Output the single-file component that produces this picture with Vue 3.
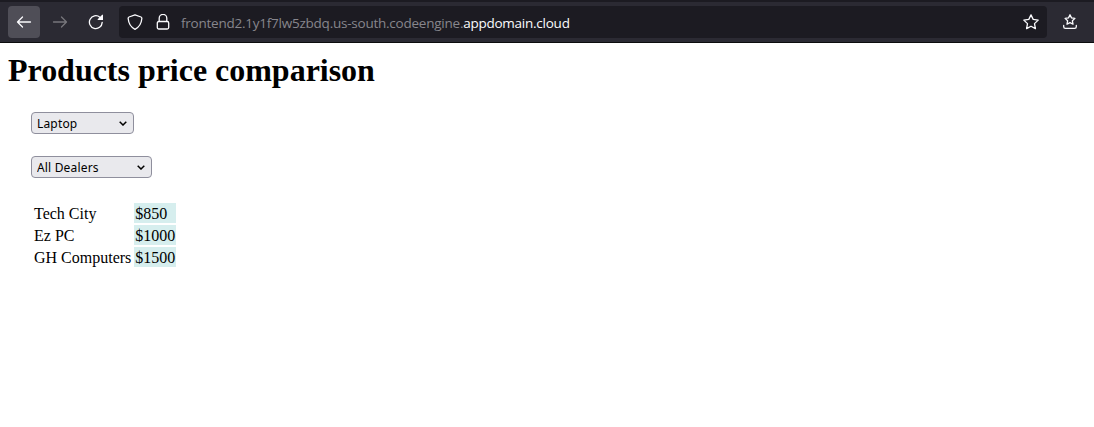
<script setup>
import { ref } from 'vue'

const products = ['Laptop']
const dealers = ['All Dealers']
const product = ref('Laptop')
const dealer = ref('All Dealers')
const prices = [
  { dealer: 'Tech City', price: 850 },
  { dealer: 'Ez PC', price: 1000 },
  { dealer: 'GH Computers', price: 1500 },
]
</script>

<template>
  <div class="window">
    <header class="toolbar">
      <button class="nav back" aria-label="Back">
        <svg width="16" height="16" viewBox="0 0 16 16"><path d="M14.500 8H1.600M6.500 3 1.500 8 6.500 13" /></svg>
      </button>
      <button class="nav forward" aria-label="Forward">
        <svg width="16" height="16" viewBox="0 0 16 16"><path d="M1.500 8h12.900M9.500 3 14.500 8 9.500 13" /></svg>
      </button>
      <button class="nav reload" aria-label="Reload">
        <svg width="16" height="16" viewBox="0 0 16 16">
          <path d="M14.2 8.4A6.4 6.4 0 1 1 11.9 3.2" />
          <path class="solid" d="M14.2.7a.5.5 0 0 1 .8.4V6H10.1a.5.5 0 0 1-.4-.8z" />
        </svg>
      </button>
      <div class="address">
        <svg class="shield" width="16" height="16" viewBox="0 0 16 16">
          <path d="M8 .8 14 3Q15 3.4 14.8 4.8C14.4 9.5 12.2 13.2 8 15.3 3.8 13.2 1.6 9.5 1.2 4.8Q1 3.4 2 3Z" />
        </svg>
        <svg class="lock" width="16" height="16" viewBox="0 0 16 16">
          <path d="M4.2 7V4.2a3.8 3.8 0 0 1 7.6 0V7" />
          <rect x="2.3" y="7.5" width="11.4" height="7.5" rx="1.5" />
        </svg>
        <span class="url"><span class="sub">frontend2.1y1f7lw5zbdq.us-south.codeengine.</span><span class="domain">appdomain.cloud</span></span>
        <svg class="star" width="16" height="16" viewBox="0 0 16 16">
          <path d="m8 .9 2.2 4.5 5 .7-3.7 3.5.9 5L8 12.2l-4.4 2.4.9-5L.8 6.1l5-.7Z" />
        </svg>
      </div>
      <svg class="tray" width="16" height="16" viewBox="0 0 16 16">
        <path d="m8 .8 1.500 3.100 3.400.500-2.500 2.400.600 3.400L8 8.600l-3 1.600.6-3.400-2.500-2.400 3.400-.5Z" />
        <path d="M1.700 11.500v1.200q0 1.700 1.700 1.700h9.200q1.700 0 1.700-1.700V11.500" />
      </svg>
    </header>
    <main class="page">
      <h1>Products price comparison</h1>
      <div class="content">
        <div class="picker product">
          <select v-model="product" aria-label="Product">
            <option v-for="p in products" :key="p">{{ p }}</option>
          </select>
          <svg width="8" height="5" viewBox="0 0 8 5"><path d="m.7.7 3.300 3.300L7.300.7" /></svg>
        </div>
        <div class="picker dealer">
          <select v-model="dealer" aria-label="Dealer">
            <option v-for="d in dealers" :key="d">{{ d }}</option>
          </select>
          <svg width="8" height="5" viewBox="0 0 8 5"><path d="m.7.7 3.300 3.300L7.300.7" /></svg>
        </div>
        <table>
          <tbody>
            <tr v-for="row in prices" :key="row.dealer">
              <td>{{ row.dealer }}</td>
              <td class="price">${{ row.price }}</td>
            </tr>
          </tbody>
        </table>
      </div>
    </main>
  </div>
</template>

<style>
body {
  margin: 0;
  background: #fff;
}
</style>

<style scoped>
.window {
  height: 427px;
  overflow: hidden;
  font-family: "Liberation Serif", serif;
  color: #000;
}
.toolbar {
  box-sizing: border-box;
  height: 43px;
  padding: 4px 16px 4px 8px;
  display: flex;
  align-items: center;
  background: #2b2a33;
  border-top: 2px solid #1c1b22;
  border-bottom: 1px solid #0c0c0d;
  color: #fbfbfe;
}
.toolbar svg {
  display: block;
  flex: none;
  fill: none;
  stroke: currentColor;
  stroke-width: 1.3;
  stroke-linecap: round;
  stroke-linejoin: round;
}
.toolbar .solid {
  fill: currentColor;
  stroke: none;
}
.nav {
  flex: none;
  width: 32px;
  height: 32px;
  margin: 0 4px 0 0;
  padding: 0;
  border: 0;
  border-radius: 4px;
  display: grid;
  place-items: center;
  background: none;
  color: inherit;
}
.back {
  background: #4f4e57;
}
.forward {
  color: #77767c;
}
.reload {
  margin-right: 7px;
}
.address {
  flex: none;
  width: 928px;
  height: 32px;
  box-sizing: border-box;
  padding: 0 8px;
  border-radius: 4px;
  display: flex;
  align-items: center;
  background: #1c1b22;
}
.lock {
  margin-left: 12px;
}
.url {
  flex: 1;
  margin-left: 10px;
  padding-top: 2px;
  font: 13.5px/20px "Open Sans", "Noto Sans", sans-serif;
  white-space: nowrap;
}
.sub {
  color: #87868c;
  letter-spacing: -0.235px;
}
.domain {
  letter-spacing: -0.25px;
}
.tray {
  margin-left: 15px;
}
.page {
  padding: 9px 8px 0;
}
h1 {
  margin: 0;
  font-size: 32px;
  line-height: 36px;
  letter-spacing: -0.02px;
}
.content {
  padding: 24px 0 0 23px;
}
.picker {
  position: relative;
  height: 22px;
  margin-bottom: 22px;
}
.product {
  width: 103px;
}
.dealer {
  width: 121px;
}
.picker select {
  appearance: none;
  display: block;
  box-sizing: border-box;
  width: 100%;
  height: 22px;
  margin: 0;
  padding: 0 5px;
  border: 1px solid #8f8f9d;
  border-radius: 4px;
  background: #e9e9ed;
  color: #000;
  font: 12px "Noto Sans", sans-serif;
  letter-spacing: 0.17px;
}
.picker svg {
  position: absolute;
  right: 7px;
  top: 9px;
  fill: none;
  stroke: #000;
  stroke-width: 1.5;
  pointer-events: none;
}
table {
  border-collapse: separate;
  border-spacing: 2px;
  margin-top: 23px;
  font-size: 16px;
  line-height: 18px;
}
td {
  padding: 2px 1px 0;
}
.price {
  background: #d6eeee;
}
</style>
